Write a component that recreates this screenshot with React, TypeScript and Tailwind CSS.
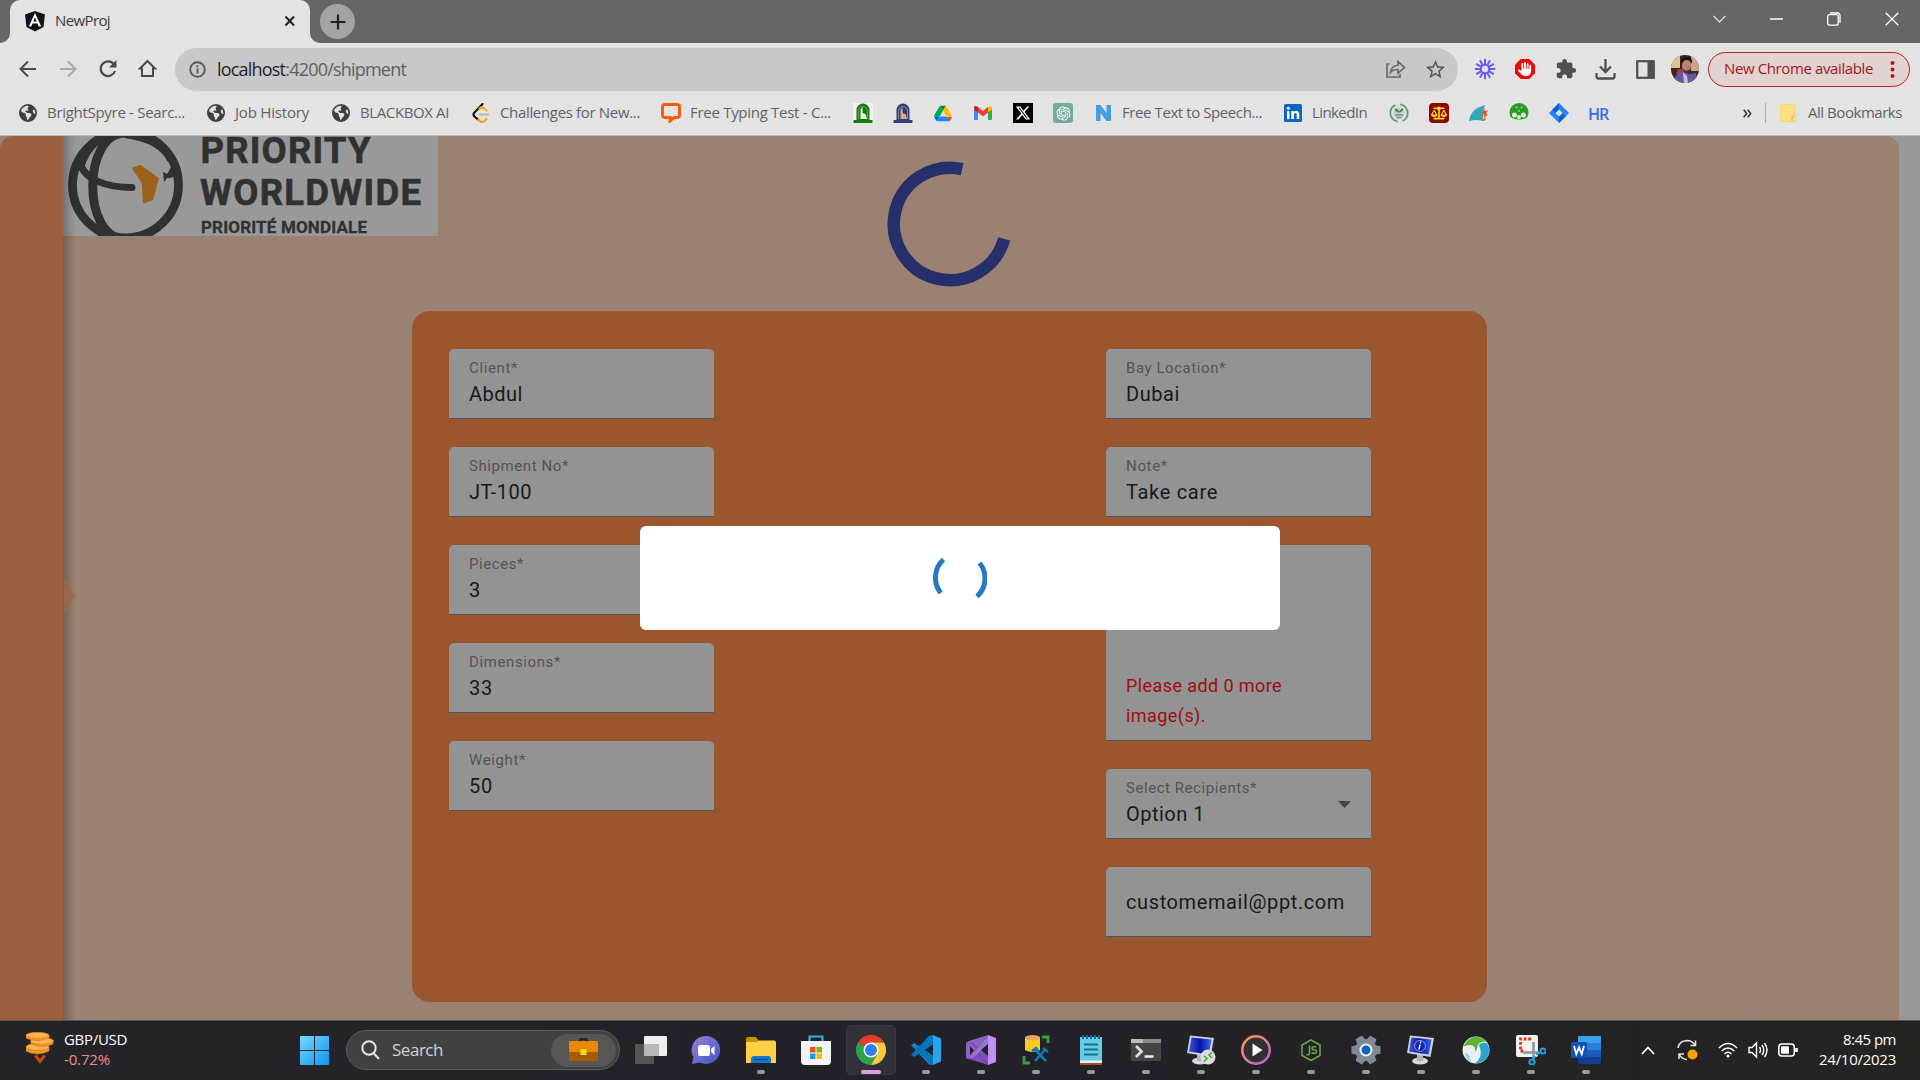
import { useLayoutEffect, useRef } from "react";
import type { ReactNode } from "react";
import { FaEarthAmericas, FaXTwitter, FaHand, FaScaleBalanced } from "react-icons/fa6";
import { RiOpenaiFill } from "react-icons/ri";
import { MdExtension, MdStarBorder } from "react-icons/md";

/** Single line of text whose tracking is adjusted so that it fills `w` pixels. */
function Fit({ w, className = "", children }: { w: number; className?: string; children: ReactNode }) {
  const ref = useRef<HTMLSpanElement>(null);
  useLayoutEffect(() => {
    const el = ref.current;
    if (!el) return;
    const adjust = () => {
      el.style.letterSpacing = "0px";
      const n = (el.textContent || "").length;
      const natural = el.getBoundingClientRect().width;
      el.style.letterSpacing = `${(w - natural) / n}px`;
    };
    adjust();
    document.fonts?.ready.then(adjust);
  }, [w]);
  return (
    <span ref={ref} className={`inline-block w-fit whitespace-nowrap ${className}`}>
      {children}
    </span>
  );
}

/* ---------- browser chrome ---------- */

function TabStrip() {
  return (
    <div className="flex h-[43px] bg-[#666666] pl-[10px]">
      <div className="relative flex h-[43px] w-[300px] items-center rounded-t-[10px] bg-[#e3e3e3] pl-[14px]">
        <svg className="absolute bottom-0 left-[-10px]" width="10" height="10"><path d="M10 0v10H0A10 10 0 0 0 10 0Z" fill="#e3e3e3" /></svg>
        <svg className="absolute right-[-10px] bottom-0" width="10" height="10"><path d="M0 0v10h10A10 10 0 0 1 0 0Z" fill="#e3e3e3" /></svg>
        <svg className="mb-[2px]" width="22" height="22" viewBox="0 0 22 22">
          <path d="M11 1 21 4.500 19.500 17 11 21.500 2.500 17 1 4.500Z" fill="#10131c" />
          <path d="M11 3 4.800 16.500h2.500l1.200-3h5l1.200 3h2.500ZM11 7.500l1.700 4H9.300Z" fill="#fff" fillRule="evenodd" />
        </svg>
        <Fit w={55} className="mb-[3px] ml-[9px] text-[15px] text-[#3a3a3a]">NewProj</Fit>
        <svg className="mr-[14px] mb-px ml-auto" width="12" height="12" viewBox="0 0 12 12"><path d="M1.500 1.500l8.500 9M10 1.500l-8.500 9" stroke="#222" strokeWidth="2" /></svg>
      </div>
      <div className="mt-[4px] ml-[10px] flex size-[35px] items-center justify-center rounded-full bg-[#a3a3a3]">
        <svg width="16" height="16"><path d="M8 0.500v15M0.500 8h15" stroke="#222" strokeWidth="2.200" /></svg>
      </div>
      <div className="ml-auto flex h-[37px] items-center gap-[44px] pr-[21px]">
        <svg width="13" height="8" fill="none" stroke="#ececec" strokeWidth="1.200"><path d="M.5.8 6.500 7l6-6.200" /></svg>
        <svg width="13" height="2"><path d="M0 1h13" stroke="#fff" strokeWidth="1.500" /></svg>
        <svg width="14" height="14" fill="none" stroke="#fff" strokeWidth="1.300"><rect x=".7" y="2.700" width="10.500" height="10.500" rx="2" /><path d="M3 1h7.500a2.500 2.500 0 0 1 2.500 2.500V11" /></svg>
        <svg width="14" height="14" stroke="#fff" strokeWidth="1.300"><path d="M.7.700l12.600 12.600M13.300.700.700 13.300" /></svg>
      </div>
    </div>
  );
}

function Toolbar() {
  return (
    <div className="flex h-[52px] items-center bg-[#e3e3e3] pl-[18px]">
      <div className="flex w-[157px] items-center gap-[20px]">
        <svg width="20" height="20" fill="none" stroke="#4a4a4a" strokeWidth="2"><path d="M18 10H3M10 2.500 2.500 10l7.500 7.500" /></svg>
        <svg width="20" height="20" fill="none" stroke="#a8a8a8" strokeWidth="2"><path d="M2 10h15M10 2.500l7.500 7.500-7.500 7.500" /></svg>
        <svg width="20" height="20" fill="none" stroke="#4a4a4a" strokeWidth="2.200"><path d="M16 5.500A7.300 7.300 0 1 0 17 12" /><path d="M18.500 1v7.500h-7.500Z" fill="#4a4a4a" stroke="none" /></svg>
        <svg width="20" height="20" fill="none" stroke="#4a4a4a" strokeWidth="2"><path d="M4 17V9.500H2L9.500 2l7.500 7.500h-2V17Z" /></svg>
      </div>
      <div className="flex h-[43px] w-[1283px] items-center rounded-full bg-[#c8c8c8] pr-[11px] pl-[14px]">
        <svg width="17" height="17" fill="none" stroke="#55585c" strokeWidth="1.900"><circle cx="8.500" cy="8.500" r="7.300" /><path d="M8.500 7.500v5M8.500 4.200v2" /></svg>
        <Fit w={189} className="ml-[11px] text-[18px] leading-[22px] text-[#5d6064]"><span className="text-[#1f1f1f]">localhost</span>:4200/shipment</Fit>
        <svg className="ml-auto" width="20" height="18" fill="none" stroke="#666" strokeWidth="1.600"><path d="M3.500 4H1v13h13v-3" /><path d="M4.500 12.500C5 8 8 5.500 12 5.300V1.500l6.500 6-6.500 5.700V9.500C9 9.400 6.500 10 4.500 12.500Z" /></svg>
        <MdStarBorder className="ml-[18px] size-[23px] text-[#555]" />
      </div>
      <div className="ml-[16px] flex items-center">
        <svg width="22" height="22" viewBox="-11 -11 22 22" stroke="#655cf5" strokeWidth="2">
          {[0, 30, 60, 90, 120, 150, 180, 210, 240, 270, 300, 330].map((a) => <path key={a} d="M0-4.300V-10.200" transform={`rotate(${a})`} />)}
          <circle r="4.200" fill="none" />
        </svg>
        <span className="relative ml-[18px] flex size-[22px] items-center justify-center">
          <svg className="absolute inset-0" width="22" height="22"><path d="M6.700 1h8.600L21 6.700v8.600L15.300 21H6.700L1 15.300V6.700Z" fill="#ec0a0a" /></svg>
          <FaHand className="relative size-[14px] text-white" />
        </span>
        <MdExtension className="ml-[19px] size-[22px] text-[#505050]" />
        <svg className="ml-[18px]" width="21" height="21" fill="none" stroke="#505050" strokeWidth="2.300"><path d="M10.500 0v12M5 7.500l5.500 5.500L16 7.500M1.500 14v3.500q0 2 2 2h14q2 0 2-2V14" /></svg>
        <svg className="ml-[20px]" width="19" height="19"><rect x="1.200" y="1.200" width="16.600" height="16.600" fill="none" stroke="#505050" strokeWidth="2.200" /><path d="M11.500 1h6.500v17h-6.500Z" fill="#505050" /></svg>
        <svg className="ml-[16px] rounded-full" width="28" height="28" viewBox="0 0 28 28">
          <rect width="28" height="28" fill="#3d2522" />
          <rect width="9" height="13" fill="#d5c898" /><rect x="20" width="8" height="16" fill="#c4a98f" />
          <path d="M7 14h6v5H5Z" fill="#b52d57" />
          <path d="M2 28q2-10 10-12l6 3 7-1 2 10Z" fill="#64599b" /><path d="m12 17 4 4 1 7h-4Z" fill="#c7bedd" />
          <ellipse cx="15.500" cy="10.500" rx="4.500" ry="6.500" fill="#b98069" /><path d="M10 10q-1-8 6-8 6 0 5 7-1-4-5-4-4 0-6 5Z" fill="#17121a" /><path d="M12 14q3 3 7 0-1 4-4 4t-3-4Z" fill="#4f2e2a" />
        </svg>
        <div className="ml-[9px] flex h-[35px] w-[202px] items-center rounded-full border-[1.500px] border-[#b9201d] bg-[#e2d2d2] pl-[15px]">
          <Fit w={149} className="mb-px text-[15px] text-[#a3171b]">New Chrome available</Fit>
          <svg className="ml-[17px]" width="5" height="17" fill="#b3141b"><circle cx="2.500" cy="2" r="2" /><circle cx="2.500" cy="8.500" r="2" /><circle cx="2.500" cy="15" r="2" /></svg>
        </div>
      </div>
    </div>
  );
}

const Globe = () => <FaEarthAmericas className="size-[18px] text-[#3c4043]" />;

function Arch({ back, color }: { back: string; color: string }) {
  return (
    <svg width="20" height="20" viewBox="0 0 20 20">
      <rect width="20" height="20" fill={back} />
      <path d="M3.500 17V7a6.500 6.500 0 0 1 13 0v10h3v3H.5v-3Z" fill={color} />
      <path d="M7.500 16V6.500L9.500 4v6l3 1 1.500 5Z" fill={back === "none" ? "#d5b277" : "#e9f3e4"} />
      <path d="M5.500 16V8a4.500 4.500 0 0 1 9 0v8" fill="none" stroke={back === "none" ? "#a6a3b4" : "#78b56c"} strokeWidth=".7" />
    </svg>
  );
}

type Bookmark = { box: string; icon: ReactNode; label?: string; w?: number };
const bookmarks: Bookmark[] = [
  { box: "w-[188px]", icon: <Globe />, label: "BrightSpyre - Searc...", w: 138 },
  { box: "w-[125px]", icon: <Globe />, label: "Job History", w: 74 },
  { box: "w-[140px]", icon: <Globe />, label: "BLACKBOX AI", w: 89 },
  {
    box: "w-[190px]", label: "Challenges for New...", w: 140,
    icon: <svg width="20" height="20" fill="none" strokeWidth="2.200" strokeLinecap="round"><path d="M11.500 1 3.500 9.500q-2 2 0 4L7.500 17" stroke="#111" /><path d="m7.500 17 2 1.500q2 1.300 4-.5l2-2M8.500 5.500q2.500-2 4.500 0l2.500 2" stroke="#fba51d" /><path d="M8.500 11.500H17" stroke="#b5b5b5" /></svg>,
  },
  {
    box: "w-[192px]", label: "Free Typing Test - C...", w: 141,
    icon: <svg width="20" height="20" fill="none" stroke="#ff5b0d" strokeWidth="3"><path d="M4 1.500h12q2.500 0 2.500 2.500v8q0 2.500-2.500 2.500h-3l-4 3.500v-3.500H4q-2.500 0-2.500-2.500V4Q1.500 1.500 4 1.500Z" /></svg>,
  },
  { box: "w-[40px]", icon: <Arch back="#f2f2f2" color="#187a11" /> },
  { box: "w-[40px]", icon: <Arch back="none" color="#343d78" /> },
  {
    box: "w-[40px]",
    icon: <svg width="18" height="17" viewBox="0 0 87 78"><path d="M7 67l4 6c1 1 2 2 3 3l14-24H0c0 2 1 3 1 4Z" fill="#0066da" /><path d="M44 25 30 1c-1 1-2 2-3 3L1 48c-1 1-1 3-1 4h28Z" fill="#00ac47" /><path d="M74 76c1-1 2-2 3-3l8-13c1-1 1-3 1-4H59l6 11Z" fill="#ea4335" /><path d="M44 25 57 1H30Z" fill="#00832d" /><path d="M59 53H28L14 77h60Z" fill="#2684fc" /><path d="M73 27 60 4c-1-1-2-2-3-3L44 25l16 28h27c0-2 0-3-1-5Z" fill="#ffba00" /></svg>,
  },
  {
    box: "w-[40px]",
    icon: <svg width="18" height="14" viewBox="0 0 18 14"><path d="M0 2v11q0 1 1 1h3V5Z" fill="#4285f4" /><path d="M18 2v11q0 1-1 1h-3V5Z" fill="#34a853" /><path d="M14 1v5.500l4-3V2q0-3-3-1.500Z" fill="#fbbc04" /><path d="M4 1v5.500l5 4 5-4V1L9 5Z" fill="#ea4335" /><path d="M4 1v5.500l-4-3V2q0-3 3-1.500Z" fill="#c5221f" /></svg>,
  },
  { box: "w-[40px]", icon: <span className="flex size-[20px] items-center justify-center bg-black"><FaXTwitter className="size-[16px] text-white" /></span> },
  { box: "w-[40px]", icon: <span className="flex size-[20px] items-center justify-center rounded-[3px] bg-[#75a99b]"><RiOpenaiFill className="size-[17px] text-white" /></span> },
  {
    box: "w-[190px]", label: "Free Text to Speech...", w: 140,
    icon: <svg width="17" height="16" fill="#4c9bdb"><path d="M1 0h4.500l6 8V0H16v16h-4.500l-6-8v8H1Z" /></svg>,
  },
  {
    box: "w-[106px]", label: "LinkedIn", w: 55,
    icon: <svg width="18" height="18"><rect width="18" height="18" rx="1.500" fill="#0a66c2" /><path d="M3 7h2.500v8H3ZM7.300 7h2.400v1.200Q10.500 6.800 12.300 6.800q3 0 3 3.600V15h-2.600v-4.200q0-1.800-1.300-1.800-1.500 0-1.500 1.800V15H7.300Z" fill="#fff" /><circle cx="4.250" cy="4.200" r="1.500" fill="#fff" /></svg>,
  },
  {
    box: "w-[40px]",
    icon: <svg width="20" height="20" fill="none"><circle cx="10" cy="10" r="8.700" stroke="#5d9d77" strokeWidth="1.800" strokeDasharray="22 5" strokeDashoffset="12" /><circle cx="10" cy="10" r="6" fill="#c4d4c9" /><path d="M5.500 5.500q1 4 4 4 .5 3 .5 0 4-.5 4.500-4-3 0-4.500 3-1-3-4.500-3Z" fill="#3f8a5f" /><path d="M6 12h8M7.500 14.500h5" stroke="#7d8c83" strokeWidth="1.500" /></svg>,
  },
  { box: "w-[40px]", icon: <span className="flex size-[20px] items-center justify-center rounded-[4px] bg-[#8d0409]"><FaScaleBalanced className="size-[16px] text-[#ffe113]" /></span> },
  {
    box: "w-[40px]",
    icon: <svg width="20" height="20"><path d="M11 13 16 4l-.5 4L19 7.500 17 11l2 .5-3 2.500 1 3-3 1Z" fill="#e8522f" /><path d="m12 17 3-7 .5 6Z" fill="#ffc61b" /><path d="M0 18Q2 5 16.500 2 12 7 14 18q-6-2-14 0Z" fill="#2ba9bb" /></svg>,
  },
  {
    box: "w-[40px]",
    icon: <svg width="20" height="20"><circle cx="10" cy="9.500" r="9.500" fill="#2a9b25" /><path d="M1 14q9 5 18 0-3 6-9 6t-9-6Z" fill="#d7ead5" /><circle cx="5.500" cy="12" r="2.500" fill="#ddeedb" /><circle cx="14.500" cy="12" r="2.500" fill="#ddeedb" /><circle cx="10" cy="14" r="2" fill="#ddeedb" /><circle cx="7.500" cy="4.500" r="1" fill="#9bd098" /><circle cx="12.500" cy="4.500" r="1" fill="#9bd098" /><circle cx="10" cy="8" r="1" fill="#9bd098" /></svg>,
  },
  {
    box: "w-[40px]",
    icon: <svg width="20" height="20"><path d="M10 0 20 10 10 20 0 10Z" fill="#2684ff" /><path d="M10 0v6.500L6.500 10 3.200 6.800ZM10 20v-6.500l3.500-3.500 3.300 3.200Z" fill="#0f5fd0" /><path d="M10 6.500 13.500 10 10 13.500 6.500 10Z" fill="#e3e3e3" /></svg>,
  },
  { box: "w-[40px]", icon: <Fit w={20} className="mt-px mr-[2px] text-[16px] font-semibold text-[#3a6cf0]">HR</Fit> },
];

function BookmarksBar() {
  return (
    <div className="flex h-[41px] items-center border-b border-[#b9b9b9] bg-[#e3e3e3] pr-[18px] pb-[4px] pl-[18px] text-[15px] leading-[20px] text-[#5f6368]">
      {bookmarks.map((b, i) => (
        <div key={i} className={`flex shrink-0 items-center ${b.box}`}>
          <span className="flex h-[20px] w-[20px] shrink-0 items-center justify-center">{b.icon}</span>
          {b.label && <Fit w={b.w!} className="mb-[2px] ml-[9px]">{b.label}</Fit>}
        </div>
      ))}
      <div className="ml-auto flex items-center">
        <svg width="9" height="9" fill="none" stroke="#333" strokeWidth="1.500"><path d="m.7.700 3 3.800-3 3.800M4.700.700l3 3.800-3 3.800" /></svg>
        <span className="ml-[13px] h-[20px] w-px bg-[#b0b0b0]" />
        <svg className="ml-[14px]" width="16" height="18"><path d="M1.500 0h12Q15 0 15 1.500V12q1 .5 1 1.500V16q0 2-2 2H1.500Q0 18 0 16.500v-15Q0 0 1.500 0Z" fill="#fbdf80" stroke="#eccb60" strokeWidth=".8" /><path d="M12 17.500V14q0-2 2-2" fill="none" stroke="#e0b73f" /></svg>
        <Fit w={94} className="mb-[2px] ml-[12px]">All Bookmarks</Fit>
      </div>
    </div>
  );
}

/* ---------- shipment page ---------- */

function Logo() {
  return (
    <svg className="block shrink-0 bg-[#999999]" width="375" height="100" viewBox="0 0 375 100">
      <g fill="none" stroke="#303131">
        <circle cx="62.500" cy="49" r="53" strokeWidth="8.800" />
        <path d="M62 -3C19 -3 19 103 62 103" strokeWidth="9" />
        <path d="M38 3Q22 16 18 34" strokeWidth="5" />
        <path d="M16 24C20 45 46 51.500 69 51.500" strokeWidth="7" strokeLinecap="round" />
        <path d="M62 -1Q98 4 107 24" strokeWidth="6" />
      </g>
      <path d="m100 36 4 2 6-10 5 8q-5 7-11 6l-3 4Z" fill="#303131" />
      <path d="m70.500 32.500 7-2.300 17 12.300-5.300 20.500-8 3-1.200-19.500Z" fill="#9c611d" stroke="#9c611d" strokeWidth="2.500" strokeLinejoin="round" />
      <g fill="#303131" stroke="#303131" fontFamily="Roboto, sans-serif" fontWeight="700">
        <text x="137.500" y="27" fontSize="36.500" strokeWidth=".6" textLength="170" lengthAdjust="spacing">PRIORITY</text>
        <text x="137" y="69.300" fontSize="36.500" strokeWidth=".6" textLength="221" lengthAdjust="spacing">WORLDWIDE</text>
        <text x="138" y="97" fontSize="17" strokeWidth=".3" textLength="166" lengthAdjust="spacing">PRIORITÉ MONDIALE</text>
      </g>
    </svg>
  );
}

function Field({ label, value, w, lw, select }: { label?: string; value: string; w: number; lw?: number; select?: boolean }) {
  return (
    <div className="flex h-[70px] w-[265px] items-center justify-between rounded-t-[5px] border-b border-[#545454] bg-[#939393] pr-[20px] pl-[20px]">
      <div className="flex flex-col">
        {label && <Fit w={lw!} className="text-[15px] leading-[20px] text-[#545454]">{label}</Fit>}
        <Fit w={w} className={`text-[20px] leading-[30px] text-[#191919] ${label ? "mt-px" : ""}`}>{value}</Fit>
      </div>
      {select && <svg className="mt-[2px]" width="13" height="7"><path d="M0 0h13L6.500 7Z" fill="#444" /></svg>}
    </div>
  );
}

function ShipmentForm() {
  return (
    <div className="ml-[349px] flex h-[691px] w-[1075px] gap-[392px] rounded-[18px] bg-[#99562f] pt-[38px] pl-[37px]">
      <div className="flex flex-col gap-[28px]">
        <Field label="Client*" lw={49} value="Abdul" w={54} />
        <Field label="Shipment No*" lw={100} value="JT-100" w={63} />
        <Field label="Pieces*" lw={55} value="3" w={12} />
        <Field label="Dimensions*" lw={92} value="33" w={24} />
        <Field label="Weight*" lw={57} value="50" w={24} />
      </div>
      <div className="flex flex-col gap-[28px]">
        <Field label="Bay Location*" lw={100} value="Dubai" w={54} />
        <Field label="Note*" lw={42} value="Take care" w={92} />
        <div className="flex h-[196px] w-[265px] flex-col justify-end rounded-t-[5px] border-b border-[#545454] bg-[#939393] pb-[9px] pl-[20px] text-[18px] leading-[30px] text-[#a00d10]">
          <Fit w={156}>Please add 0 more</Fit>
          <Fit w={80}>image(s).</Fit>
        </div>
        <Field label="Select Recipients*" lw={131} value="Option 1" w={79} select />
        <Field value="customemail@ppt.com" w={219} />
      </div>
    </div>
  );
}

function Page() {
  return (
    <div className="relative flex h-[884px] overflow-hidden bg-[#999999] font-['Roboto',sans-serif]">
      <div className="flex w-[1899px] overflow-hidden rounded-tr-[13px] bg-[#9a8172]">
        <aside className="relative z-10 w-[63px] shrink-0 rounded-tl-[13px] bg-[#9a6040]">
          <span className="absolute top-0 left-[63px] h-full w-[12px] bg-linear-to-r from-black/25 to-transparent" />
          <svg className="absolute top-[442px] left-[64px]" width="12" height="36"><path d="M0 0 12 18 0 36Z" fill="#9a6a50" fillOpacity=".85" /></svg>
        </aside>
        <main className="flex flex-1 flex-col">
          <div className="flex h-[175px]">
            <Logo />
            <svg className="mt-[25px] ml-[449px]" width="126" height="126" fill="none" stroke="#28306c" strokeWidth="12.500"><path d="M75.200 8.100A56.200 56.200 0 1 0 117.200 77.800" /></svg>
          </div>
          <ShipmentForm />
        </main>
      </div>
      <div className="absolute top-[390px] left-[640px] z-20 flex h-[104px] w-[640px] items-center justify-center rounded-[6px] bg-white">
        <svg width="54" height="54" fill="none" stroke="#2778c4" strokeWidth="5"><path d="M10.500 8.500A24.500 24.500 0 0 0 7.800 42M46.600 12A24.500 24.500 0 0 1 44 45.500" /></svg>
      </div>
    </div>
  );
}

/* ---------- taskbar ---------- */

function Monitor({ children }: { children?: ReactNode }) {
  return (
    <svg width="30" height="30" viewBox="0 0 30 30">
      <defs><linearGradient id="screen" x1="0" x2="1"><stop offset="0" stopColor="#3556d8" /><stop offset=".5" stopColor="#0813a2" /><stop offset="1" stopColor="#3c68ef" /></linearGradient></defs>
      <ellipse cx="14" cy="26" rx="8" ry="3.500" fill="#d5d8dc" /><path d="M11 19h6v7h-6Z" fill="#adb2b8" />
      <path d="m4 .500 24 2.500-3.500 19L1 18Z" fill="#cdd2da" /><path d="m5.500 2.500 20 2-2.800 15L3 16.500Z" fill="url(#screen)" />
      {children}
    </svg>
  );
}

const apps: { icon: ReactNode; dot?: boolean; active?: boolean }[] = [
  { icon: <svg width="32" height="28"><rect x="9" y="0" width="23" height="20" rx="1" fill="#eee" /><path d="M0 8h19v20H0Z" fill="#555" /><path d="M9 8h15v12H9Z" fill="#b8b8b8" /></svg> },
  { icon: <svg width="30" height="30"><defs><linearGradient id="chat" x1="0" y1="0" x2="1" y2="1"><stop stopColor="#8f83d1" /><stop offset="1" stopColor="#4556c7" /></linearGradient></defs><path d="M15 1a14 14 0 1 1-6 26.600L1 29l1.500-7A14 14 0 0 1 15 1Z" fill="url(#chat)" /><rect x="7" y="10" width="12" height="11" rx="2.500" fill="#fff" /><path d="m20 14 3.500-3v9L20 17Z" fill="#fff" /></svg> },
  { icon: <svg width="30" height="28"><path d="M0 3q0-2 2-2h8l3 4v6H0Z" fill="#d28c04" /><path d="M0 6h11l2-1.500h15q2 0 2 2V27H0Z" fill="#ffcf48" /><path d="M5 27v-4q0-3 3-3h14q3 0 3 3v4Z" fill="#1378c9" /><path d="M8 23.500h14" stroke="#0b4c8c" strokeWidth="1.500" /></svg>, dot: true },
  { icon: <svg width="30" height="30"><path d="M8.500 6V1.500h13V6" fill="none" stroke="#27b4e8" strokeWidth="2.200" /><path d="M0 6h30v20q0 4-4 4H4q-4 0-4-4Z" fill="#f4f4f4" /><path d="M9 12h5.500v5.500H9Z" fill="#f25022" /><path d="M15.500 12H21v5.500h-5.500Z" fill="#7fba00" /><path d="M9 18.500h5.500V24H9Z" fill="#00a4ef" /><path d="M15.500 18.500H21V24h-5.500Z" fill="#ffb900" /></svg> },
  { icon: <svg width="30" height="30" viewBox="-15 -15 30 30"><path d="M0 0-13-7.500A15 15 0 0 1 13-7.500H0Z" fill="#e33b2e" /><path d="M-13-7.500A15 15 0 0 0 0 15L6.500 3.750 0 0Z" fill="#2ba24c" /><path d="M13-7.500A15 15 0 0 1 0 15L6.500 3.750 0-7.500Z" fill="#fcc934" /><circle r="7.500" fill="#fff" /><circle r="6" fill="#307df0" /></svg>, active: true },
  { icon: <svg width="30" height="30"><path d="M22 0 9 12 3.500 8 0 10l18 19.500 4 .5Z" fill="#0a83cc" /><path d="M22 30 9 18l-5.500 4L0 20 18 .800 22 0Z" fill="#0873ba" /><path d="M22 0 30 3.500v23L22 30Z" fill="#27a6ef" /><path d="M22 9.500 14 15l8 5.500Z" fill="#222228" /></svg>, dot: true },
  { icon: <svg width="30" height="30"><path d="m0 8 3-2 19 24-3-1L0 23Z" fill="#7e50b7" /><path d="M3 6 0 8v15l3 1L22 0Z" fill="#8d63c4" /><path d="M4 11v9l4-4.500Z" fill="#222228" /><path d="M3 6 8 8l14 13v9Z" fill="#7e50b7" /><path d="m3 24 19-24v9L8 22l-5 2Z" fill="#9a73d0" /><path d="M22 0 30 3v24l-8 3Z" fill="#bf92f1" /><path d="M22 9.500 15 15l7 5.500Z" fill="#222228" /></svg>, dot: true },
  { icon: <svg width="28" height="34"><path d="M3 4v13q7 4 15 0V4Z" fill="#f8ce1e" /><ellipse cx="10.500" cy="4.800" rx="7.500" ry="2.800" fill="#e3a35c" /><path d="M20 4h6v6M2 23v7h6" fill="none" stroke="#3f993f" strokeWidth="3" /><path d="m13 28 10-11M13 17l11 11" stroke="#1477b6" strokeWidth="2.600" /><path d="m10 18 4-3 3 4M21 15l5 4" stroke="#1477b6" strokeWidth="2.500" fill="none" /></svg>, dot: true },
  { icon: <svg width="24" height="30"><path d="M1 2h22v26H1Z" fill="#66cbe3" /><path d="M1 25.500h22V28H1Z" fill="#f1f1f1" /><path d="M1 28h22v2H1Z" fill="#a0521c" /><path d="M4 0v4M8 0v4M12 0v4M16 0v4M20 0v4" stroke="#146f8c" strokeWidth="2" /><path d="M5 9.500h14M5 14.500h14M5 19.500h14" stroke="#11708f" strokeWidth="2" /></svg>, dot: true },
  { icon: <svg width="30" height="22"><rect width="30" height="22" rx="1.500" fill="#454545" /><path d="M0 0h30v4H0Z" fill="#8a8a8a" /><path d="M0 0h12v4H0Z" fill="#bbb" /><path d="m5 7 5.500 5.500L5 18" fill="none" stroke="#ddd" strokeWidth="2.800" /><path d="M13.500 17.500h9" stroke="#eee" strokeWidth="2.500" /></svg>, dot: true },
  { icon: <Monitor><circle cx="22" cy="22" r="7.500" fill="#dedede" /><path d="m18 21 3 2.500-3 3M26 17.500 23 20l3 3" stroke="#35a93a" strokeWidth="1.600" fill="none" /></Monitor>, dot: true },
  { icon: <svg width="30" height="30"><defs><linearGradient id="mp" x1="0" y1="0" x2="1" y2="1"><stop stopColor="#ff9a4a" /><stop offset="1" stopColor="#b163d8" /></linearGradient></defs><circle cx="15" cy="15" r="13.700" fill="#303033" stroke="url(#mp)" strokeWidth="2.500" /><path d="m11.500 8.500 10 6.500-10 6.500Z" fill="#fff" /></svg>, dot: true },
  { icon: <svg width="20" height="22"><path d="m10 1 9 5v10.500l-9 5-9-5V6Z" fill="none" stroke="#6ca542" strokeWidth="1.600" /><path d="M8.500 6.500V14q0 2.300-3 1.500M15 8q-4-1-4 1t3 2q2.500.800 1 2.800-2 1-4.500 0" fill="none" stroke="#6ca542" strokeWidth="1.500" /></svg>, dot: true },
  { icon: <svg width="30" height="30" viewBox="-15 -15 30 30"><g fill="#7f8a96">{[0, 60, 120, 180, 240, 300].map((a) => <path key={a} d="M-3.700-14.500h7.400L5-8H-5Z" transform={`rotate(${a + 30})`} />)}<circle r="11" /></g><circle r="5.500" fill="#0a66b8" stroke="#f1f3f5" strokeWidth="2" /></svg>, dot: true },
  { icon: <Monitor><circle cx="14" cy="11" r="5.500" fill="none" stroke="#8899e8" /><path d="M14.500 6.500v2M14 9.500l-1 5" stroke="#fff" strokeWidth="1.500" /></Monitor>, dot: true },
  { icon: <svg width="28" height="28"><circle cx="14" cy="14" r="13.500" fill="#e9eff0" /><path d="M1 11Q6 1 14 .700q7 .300 10 5.300-6-1-8 3-1 5-3 7 1-7-5-7-4 0-7 2Z" fill="#5cb431" /><path d="M17 9q2-3 8-2 4 7 1 13-4 7-13 7.500Q22 20 17 9Z" fill="#2ba4d2" /><path d="M3 17q5-1 6 10-5-3-6-10Z" fill="#a6cfe1" /></svg>, dot: true },
  { icon: <svg width="30" height="30"><rect width="22" height="22" rx="2" fill="#f1f1f1" /><path d="M15 4H4.500v12H8" fill="none" stroke="#d93a0b" strokeWidth="2.800" strokeDasharray="2.800 1.700" /><path d="M17.500 7v16M7 17.500h16" stroke="#8e969e" strokeWidth="2.600" /><circle cx="27" cy="16" r="2.600" fill="none" stroke="#1ba0e0" strokeWidth="2" /><circle cx="16" cy="27" r="2.600" fill="none" stroke="#1ba0e0" strokeWidth="2" /><path d="m25 17.500-5 2M17 25l2-4" stroke="#1ba0e0" strokeWidth="2" /></svg>, dot: true },
  { icon: <svg width="30" height="28"><path d="M7 1q0-1 1-1h21q1 0 1 1v6H7Z" fill="#3ba1ee" /><path d="M7 7h23v7H7Z" fill="#2980dc" /><path d="M7 14h23v7H7Z" fill="#1b5cbd" /><path d="M7 21h23v6q0 1-1 1H8q-1 0-1-1Z" fill="#123d91" /><rect y="6" width="16" height="16" rx="1.500" fill="#1651b4" /><path d="m3 10 2.300 8L8 11.500l2.700 6.500L13 10" fill="none" stroke="#fff" strokeWidth="1.900" /></svg>, dot: true },
];

function Taskbar() {
  return (
    <div className="flex h-[60px] items-stretch border-t border-[#56514f] bg-linear-to-r from-[#242528] via-[#232129] to-[#242422] pb-px text-white">
      <div className="flex w-[300px] items-center pl-[26px]">
        <svg className="mb-[2px]" width="28" height="34" viewBox="0 0 28 34"><g stroke="#db7c12" strokeWidth=".7"><path d="M0 15v4q11 6 23 0v-4Z" fill="#f19a2a" /><ellipse cx="11.500" cy="15" rx="11.500" ry="3.500" fill="#fdb552" /><path d="M5 9v3q11 5 22 0V9Z" fill="#f09726" /><ellipse cx="16" cy="9" rx="11.500" ry="3.300" fill="#fdb552" /><path d="M0 3v3q11 5 23 0V3Z" fill="#f29c2d" /><ellipse cx="11.500" cy="3.300" rx="11.500" ry="3" fill="#fdb552" /></g><path d="m8 24 3-1 3 4 3-4 3 1-6 8Z" fill="#cf4715" /></svg>
        <div className="mb-[3px] ml-[10px] flex flex-col text-[15px] leading-[20px]">
          <Fit w={63}>GBP/USD</Fit>
          <Fit w={46} className="text-[#f08a94]">-0.72%</Fit>
        </div>
      </div>
      <div className="flex w-[323px] items-center">
        <svg width="29" height="29"><defs><linearGradient id="win" x1="0" y1="0" x2="1" y2="1"><stop stopColor="#79d8fc" /><stop offset="1" stopColor="#0a95f5" /></linearGradient></defs><path d="M0 1q0-1 1-1h13v14H0ZM15 0h13q1 0 1 1v13H15ZM0 15h14v14H1q-1 0-1-1ZM15 15h14v13q0 1-1 1H15Z" fill="url(#win)" /></svg>
        <div className="ml-[17px] flex h-[40px] w-[274px] shrink-0 items-center rounded-full border border-[#5d5c5c] bg-[#424141] pr-[3px] pl-[14px]">
          <svg width="19" height="20" fill="none" stroke="#e3e6e9" strokeWidth="2"><circle cx="8" cy="8" r="6.700" /><path d="m12.500 13 5.500 6" /></svg>
          <Fit w={51} className="ml-[12px] text-[17px] text-[#d2d2d2]">Search</Fit>
          <span className="ml-auto flex h-[33px] w-[65px] items-center justify-center rounded-full bg-[#575556]">
            <svg width="29" height="24"><path d="M10.500 4q0-3 4-3t4 3" fill="none" stroke="#262626" strokeWidth="2.500" /><rect y="3" width="29" height="20" rx="1" fill="#e88903" /><path d="M0 14h29v9H0Z" fill="#a55a07" /><rect x="11.500" y="11" width="6" height="6" fill="#ffd91a" /></svg>
          </span>
        </div>
      </div>
      <div className="flex">
        {apps.map((a, i) => (
          <div key={i} className="relative flex w-[55px] shrink-0 items-center justify-center">
            {a.active && <span className="absolute top-[4px] left-[3px] h-[50px] w-[50px] rounded-[5px] border border-[#3b3940] bg-[#312f37]" />}
            <span className="relative">{a.icon}</span>
            {a.dot && <span className="absolute bottom-[5px] h-[4px] w-[8px] rounded-full bg-[#9a9a9d]" />}
            {a.active && <span className="absolute bottom-[5px] h-[4px] w-[20px] rounded-full bg-[#dc9de4]" />}
          </div>
        ))}
      </div>
      <div className="ml-auto flex items-center pr-[24px]">
        <svg width="14" height="9" fill="none" stroke="#fff" strokeWidth="1.800"><path d="m1 8 6-6.500L13 8" /></svg>
        <svg className="ml-[22px]" width="22" height="22" fill="none" stroke="#e5e5e5" strokeWidth="1.500"><path d="M1 9Q2 2 10 1.500q5 0 8 4.500M18.500 1.500V6.500H13.500M10 20.500q-5 0-8-5.500M2 20v-5h5" /><circle cx="15.500" cy="15.500" r="5" fill="#ff9b05" stroke="none" /></svg>
        <svg className="ml-[19px]" width="20" height="16" fill="none" stroke="#fff" strokeWidth="1.600"><path d="M1 6q9-9 18 0M3.700 9q6.300-6 12.600 0M6.500 12q3.500-3.500 7 0" /><circle cx="10" cy="14" r="1.500" fill="#fff" stroke="none" /></svg>
        <svg className="ml-[10px]" width="20" height="18" fill="none" stroke="#fff" strokeWidth="1.400"><path d="M1 6.500h3L8.500 2v14L4 11.500H1ZM11.500 6q2 3 0 6M14 4q3.500 5 0 10M16.500 2q5 7 0 14" /></svg>
        <svg className="ml-[10px]" width="20" height="14" fill="none" stroke="#fff" strokeWidth="1.600"><rect x=".8" y="1" width="15.500" height="12" rx="3" /><path d="M18.500 5v4" strokeWidth="2.500" /><rect x="3" y="3.300" width="8" height="7.400" rx="1" fill="#fff" stroke="none" /></svg>
        <div className="mb-[3px] ml-[21px] flex flex-col items-end text-[15px] leading-[20px]">
          <Fit w={53}>8:45 pm</Fit>
          <Fit w={77}>24/10/2023</Fit>
        </div>
      </div>
    </div>
  );
}

export default function App() {
  return (
    <div className="flex h-[1080px] w-[1920px] flex-col overflow-hidden font-['Open_Sans',sans-serif]">
      <TabStrip />
      <Toolbar />
      <BookmarksBar />
      <Page />
      <Taskbar />
    </div>
  );
}
